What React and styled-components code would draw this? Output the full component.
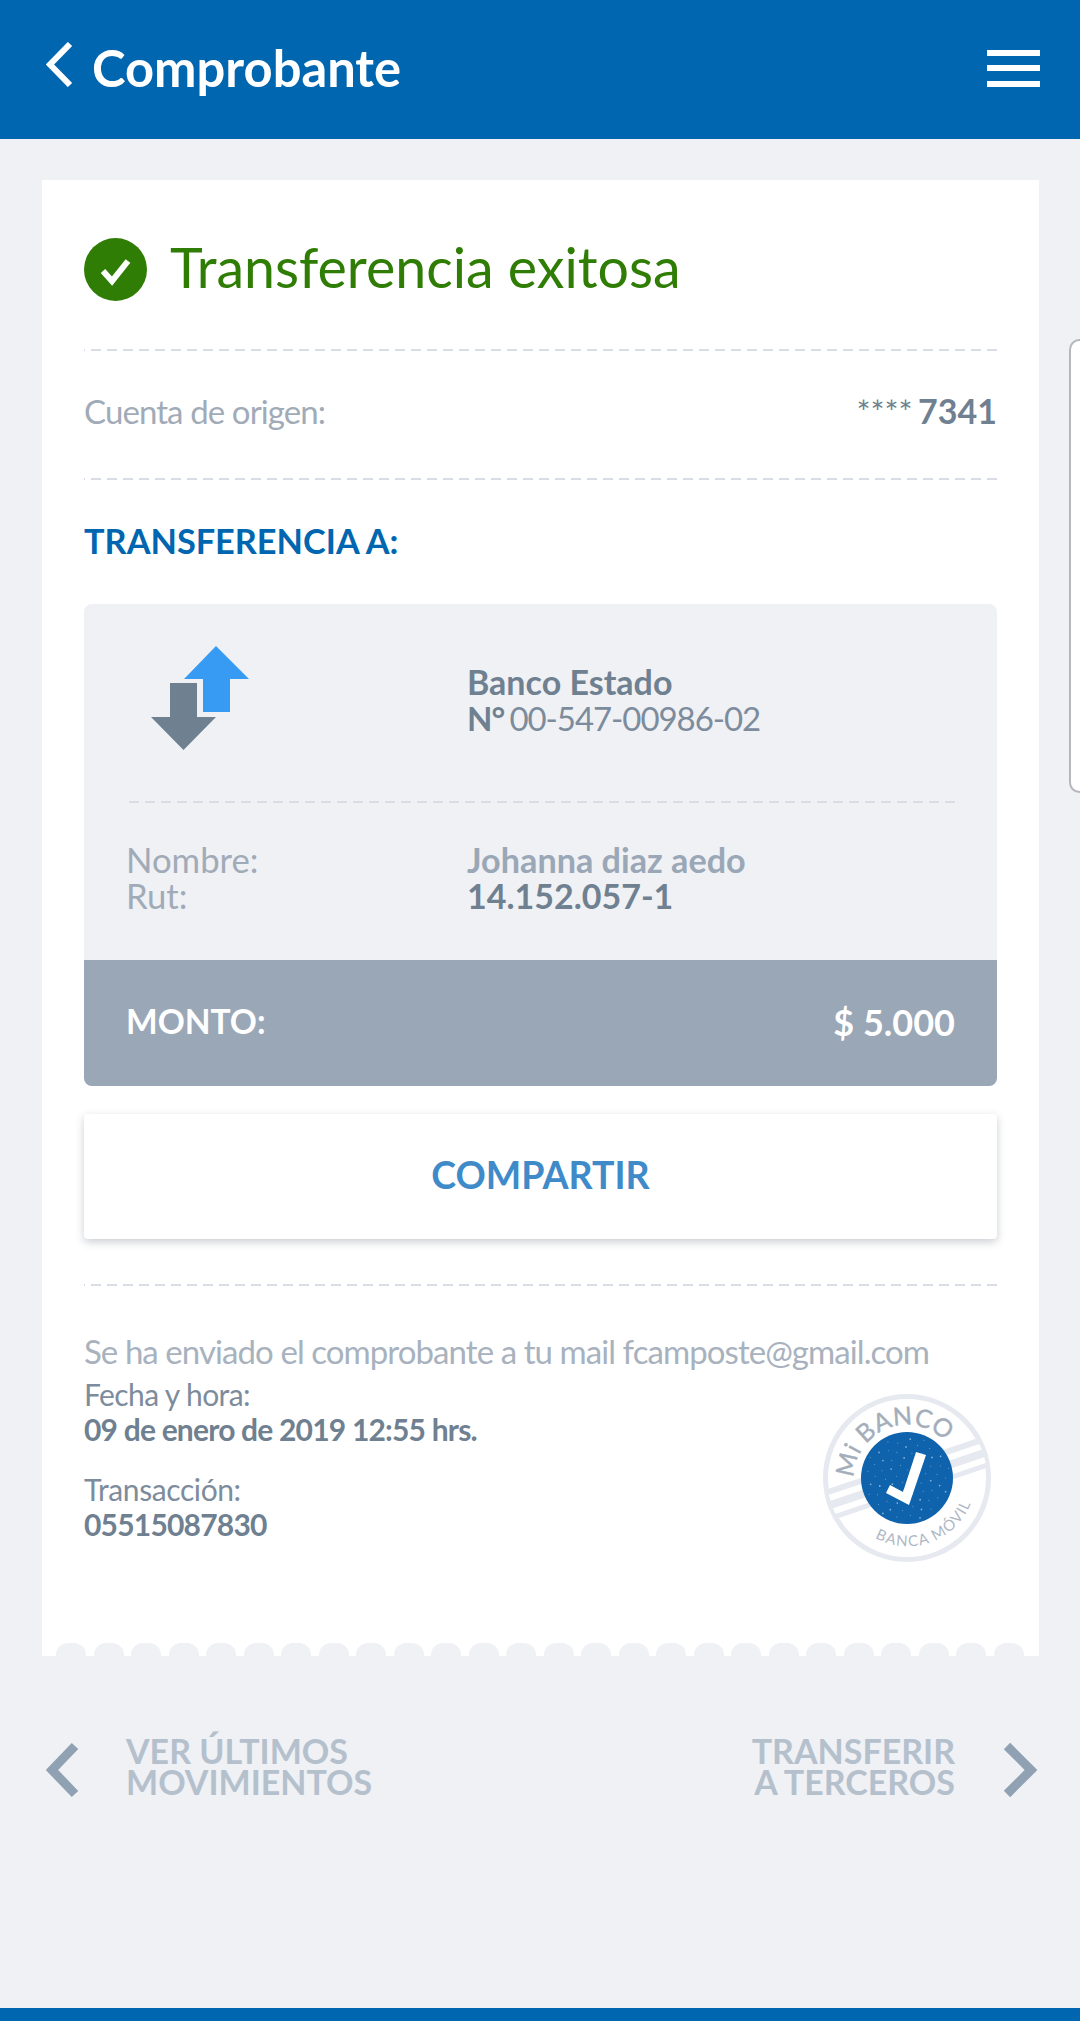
import React from "react";
import styled, { createGlobalStyle } from "styled-components";

const GlobalStyle = createGlobalStyle`
    html, body {
        margin: 0;
        padding: 0;
        background: #eff1f5;
        font-family: Lato, "Open Sans", sans-serif;
    }
`;

const App = () => {
    return (
        <Page>
            <GlobalStyle />
            <Header>
                <HeaderLeft>
                    <svg width="28" height="45" viewBox="0 0 28 45">
                        <path d="M24 2 L4 22.500 L24 43" fill="none" stroke="#fff" strokeWidth="6" />
                    </svg>
                    <HeaderTitle>Comprobante</HeaderTitle>
                </HeaderLeft>
                <Burger>
                    <span />
                    <span />
                    <span />
                </Burger>
            </Header>

            <Main>
                <Card>
                    <StatusRow>
                        <svg width="63" height="63" viewBox="0 0 63 63">
                            <circle cx="31.5" cy="31.5" r="31.5" fill="#2f7d05" />
                            <path d="M19 33 L28 43 L44 23" fill="none" stroke="#fff" strokeWidth="6" />
                        </svg>
                        <StatusText>Transferencia exitosa</StatusText>
                    </StatusRow>
                    <Dashed />
                    <OriginRow>
                        <OriginLabel>Cuenta de origen:</OriginLabel>
                        <OriginValue>
                            <span>****</span> <b>7341</b>
                        </OriginValue>
                    </OriginRow>
                    <Dashed />
                    <SectionTitle>TRANSFERENCIA A:</SectionTitle>

                    <Box>
                        <BoxBody>
                            <BankRow>
                                <IconCol>
                                    <svg width="98" height="104" viewBox="0 0 98 104">
                                        <path d="M65 0 L98 33 H79 V66 H52 V33 H33 Z" fill="#379bf4" />
                                        <path d="M19 37 H46 V71 H65 L32.500 104 L0 71 H19 Z" fill="#6f8091" />
                                    </svg>
                                </IconCol>
                                <BankText>
                                    <BankName>Banco Estado</BankName>
                                    <BankNumber>
                                        <b>N°</b> 00-547-00986-02
                                    </BankNumber>
                                </BankText>
                            </BankRow>
                            <Dashed />
                            <PersonRow>
                                <PersonLabels>
                                    <div>Nombre:</div>
                                    <div>Rut:</div>
                                </PersonLabels>
                                <div>
                                    <PersonName>Johanna diaz aedo</PersonName>
                                    <PersonRut>14.152.057-1</PersonRut>
                                </div>
                            </PersonRow>
                        </BoxBody>
                        <AmountBar>
                            <AmountLabel>MONTO:</AmountLabel>
                            <AmountValue>$ 5.000</AmountValue>
                        </AmountBar>
                    </Box>

                    <ShareButton>COMPARTIR</ShareButton>
                    <Dashed />

                    <MailNote>Se ha enviado el comprobante a tu mail fcamposte@gmail.com</MailNote>
                    <DetailRow>
                        <div>
                            <DetailBlock>
                                <DetailLabel>Fecha y hora:</DetailLabel>
                                <DetailValue>09 de enero de 2019 12:55 hrs.</DetailValue>
                            </DetailBlock>
                            <DetailBlock>
                                <DetailLabel $tight>Transacción:</DetailLabel>
                                <DetailValue>05515087830</DetailValue>
                            </DetailBlock>
                        </div>
                        <Stamp />
                    </DetailRow>
                    <Scallops>
                        {Array.from({ length: 26 }).map((_, i) => (
                            <Scallop key={i} />
                        ))}
                    </Scallops>
                </Card>

                <NavRow>
                    <NavLink $gap={43} $inset={3}>
                        <Chevron d="M30 4 L7 28 L30 52" />
                        <NavText>
                            VER ÚLTIMOS
                            <br />
                            MOVIMIENTOS
                        </NavText>
                    </NavLink>
                    <NavLink $gap={46}>
                        <NavText $right>
                            TRANSFERIR
                            <br />A TERCEROS
                        </NavText>
                        <Chevron d="M6 4 L30 28 L6 52" />
                    </NavLink>
                </NavRow>
            </Main>

            <BottomBar />
            <SideTab />
        </Page>
    );
};

const Chevron = ({ d }) => (
    <svg width="38" height="56" viewBox="0 0 38 56">
        <path d={d} fill="none" stroke="#8fa1b3" strokeWidth="9" />
    </svg>
);

// little worn-ink specks on the stamp's disc
const specks = Array.from({ length: 70 }).map((_, i) => {
    const angle = i * 2.399;
    const dist = 43 * Math.sqrt((i + 0.5) / 70);
    return {
        x: 85 + dist * Math.cos(angle),
        y: 85 + dist * Math.sin(angle),
        r: i % 3 === 0 ? 0.9 : 0.5,
    };
});

const Stamp = () => (
    <StampBox>
        <svg width="170" height="170" viewBox="0 0 170 170">
            <defs>
                <path id="arcTop" d="M 32 85 A 53 53 0 0 1 130 57" />
                <path id="arcBottom" d="M 53 145 A 68 68 0 0 0 151 104" />
                <clipPath id="stampClip">
                    <circle cx="85" cy="85" r="80" />
                </clipPath>
            </defs>
            <circle cx="85" cy="85" r="81.5" fill="#fff" stroke="#e6e9ef" strokeWidth="5" />
            <g clipPath="url(#stampClip)" transform="rotate(-18.7 85 85)">
                <rect x="0" y="70" width="170" height="31" fill="#e6e9ef" />
                <rect x="0" y="76" width="170" height="6" fill="#fff" />
                <rect x="0" y="90" width="170" height="6" fill="#fff" />
            </g>
            <circle cx="85" cy="85" r="46" fill="#0f62ac" />
            {specks.map((s, i) => (
                <circle key={i} cx={s.x} cy={s.y} r={s.r} fill="#7fb0da" />
            ))}
            <polygon points="64,100 87,112 104,62 94,59 81,99 68,92" fill="#fff" />
            <text
                fontFamily="Lato, sans-serif"
                fontSize="25"
                fill="#a3aeba"
                stroke="#a3aeba"
                strokeWidth="0.4"
                letterSpacing="0.3"
            >
                <textPath href="#arcTop">Mi BANCO</textPath>
            </text>
            <text fontFamily="Lato, sans-serif" fontSize="15" fill="#aeb8c4" letterSpacing="1.2">
                <textPath href="#arcBottom">BANCA MÓVIL</textPath>
            </text>
        </svg>
    </StampBox>
);

const Page = styled.div`
    position: relative;
    width: 1080px;
    height: 2021px;
    overflow: hidden;
    display: flex;
    flex-direction: column;
    background: #eff1f5;
`;

const Header = styled.header`
    height: 139px;
    background: #0066b0;
    display: flex;
    align-items: center;
    justify-content: space-between;
    padding: 0 40px 10px 46px;
    box-sizing: border-box;
    flex: none;
`;

const HeaderLeft = styled.div`
    display: flex;
    align-items: center;
    gap: 18px;
`;

const HeaderTitle = styled.h1`
    margin: 6px 0 0;
    color: #fff;
    font-size: 50.700px;
    font-weight: 700;
`;

const Burger = styled.div`
    width: 53px;
    margin-top: 7px;
    display: flex;
    flex-direction: column;
    gap: 9.500px;
    span {
        display: block;
        height: 6px;
        background: #fff;
    }
`;

const Main = styled.main`
    flex: 1;
    padding: 41px 41px 0 42px;
`;

const Card = styled.section`
    position: relative;
    background: #fff;
    padding: 0 42px;
    height: 1476px;
`;

const StatusRow = styled.div`
    height: 169px;
    box-sizing: border-box;
    padding-top: 58px;
    display: flex;
    align-items: flex-start;
    gap: 23px;
`;

const StatusText = styled.div`
    color: #2f7d05;
    font-size: 55.500px;
    margin-top: -5px;
`;

const Dashed = styled.div`
    height: 2px;
    background: linear-gradient(90deg, transparent 6px, #d9dee6 6px) right top / 16px 2px repeat-x;
`;

const OriginRow = styled.div`
    height: 127px;
    box-sizing: border-box;
    padding-bottom: 8px;
    display: flex;
    align-items: center;
    justify-content: space-between;
`;

const OriginLabel = styled.div`
    font-size: 33px;
    letter-spacing: -0.9px;
    color: #a1abb8;
`;

const OriginValue = styled.div`
    font-size: 33px;
    word-spacing: -3px;
    color: #6f8091;
    b {
        font-size: 34px;
        font-weight: 700;
    }
`;

const SectionTitle = styled.h2`
    margin: 0;
    height: 124px;
    box-sizing: border-box;
    padding-bottom: 4px;
    display: flex;
    align-items: center;
    color: #0066b0;
    font-size: 34.300px;
    font-weight: 700;
`;

const Box = styled.div`
    border-radius: 8px;
    overflow: hidden;
    background: #eff1f5;
`;

const BoxBody = styled.div`
    height: 356px;
    padding: 0 42px;
`;

const BankRow = styled.div`
    height: 197px;
    display: flex;
    align-items: center;
`;

const IconCol = styled.div`
    width: 341px;
    padding-left: 25px;
    box-sizing: border-box;
    svg {
        display: block;
        margin-top: -10px;
    }
`;

const BankText = styled.div`
    margin-top: -5px;
`;

const BankName = styled.div`
    font-size: 34px;
    line-height: 36px;
    font-weight: 700;
    color: #6f8091;
`;

const BankNumber = styled.div`
    font-size: 33px;
    line-height: 36px;
    letter-spacing: -1.05px;
    word-spacing: -2px;
    color: #7d8c9c;
    b {
        color: #6f8091;
    }
`;

const PersonRow = styled.div`
    display: flex;
    padding-top: 39px;
`;

const PersonLabels = styled.div`
    width: 341px;
    font-size: 34.700px;
    line-height: 36px;
    color: #a1abb8;
`;

const PersonName = styled.div`
    font-size: 34.200px;
    line-height: 36px;
    font-weight: 700;
    color: #9aa7b7;
`;

const PersonRut = styled.div`
    font-size: 34px;
    line-height: 36px;
    font-weight: 700;
    color: #6f8091;
`;

const AmountBar = styled.div`
    height: 126px;
    background: #9aa7b7;
    padding: 0 42px;
    display: flex;
    align-items: center;
    justify-content: space-between;
    color: #fff;
    font-weight: 700;
`;

const AmountLabel = styled.div`
    font-size: 33.500px;
    margin-top: -5px;
`;

const AmountValue = styled.div`
    font-size: 36px;
    margin-top: -2px;
`;

const ShareButton = styled.button`
    display: block;
    width: 100%;
    height: 125px;
    margin: 28px 0 45px;
    padding: 0 0 5px;
    border: 0;
    border-radius: 4px;
    background: #fff;
    box-shadow: 0 3px 8px rgba(60, 75, 95, 0.28);
    color: #3f8bc9;
    font-family: inherit;
    font-size: 37.500px;
    font-weight: 700;
`;

const MailNote = styled.div`
    margin-top: 47px;
    font-size: 33px;
    line-height: 36px;
    letter-spacing: -0.93px;
    color: #a8b2be;
`;

const DetailRow = styled.div`
    display: flex;
    justify-content: space-between;
    align-items: flex-start;
`;

const DetailBlock = styled.div`
    margin-top: 8px;
    margin-bottom: 25px;
`;

const DetailLabel = styled.div`
    font-size: 30px;
    line-height: 35px;
    letter-spacing: ${props => (props.$tight ? "-0.4px" : "-0.6px")};
    color: #7d8c9c;
`;

const DetailValue = styled.div`
    font-size: 30px;
    line-height: 35px;
    letter-spacing: -0.8px;
    font-weight: 700;
    color: #6f8091;
`;

const StampBox = styled.div`
    margin-right: 5px;
    margin-top: 24px;
`;

const Scallops = styled.div`
    position: absolute;
    left: 14px;
    right: 0;
    bottom: 0;
    display: flex;
    gap: 7.500px;
`;

const Scallop = styled.div`
    width: 30px;
    height: 13px;
    flex: none;
    background: #eff1f5;
    border-radius: 12px 12px 0 0;
`;

const NavRow = styled.nav`
    margin-top: 79px;
    display: flex;
    justify-content: space-between;
`;

const NavLink = styled.div`
    display: flex;
    align-items: center;
    gap: ${props => props.$gap}px;
    margin-left: ${props => props.$inset || 0}px;
`;

const NavText = styled.div`
    font-size: 34px;
    line-height: 31px;
    font-weight: 700;
    margin-bottom: 8px;
    color: #b5c0cd;
    text-align: ${props => (props.$right ? "right" : "left")};
`;

const BottomBar = styled.div`
    height: 13px;
    background: #0066b0;
    flex: none;
`;

const SideTab = styled.div`
    position: absolute;
    top: 339px;
    right: -10px;
    width: 21px;
    height: 454px;
    background: #fff;
    border: 2px solid #b4b8bd;
    border-radius: 14px;
    box-sizing: border-box;
`;

export default App;
